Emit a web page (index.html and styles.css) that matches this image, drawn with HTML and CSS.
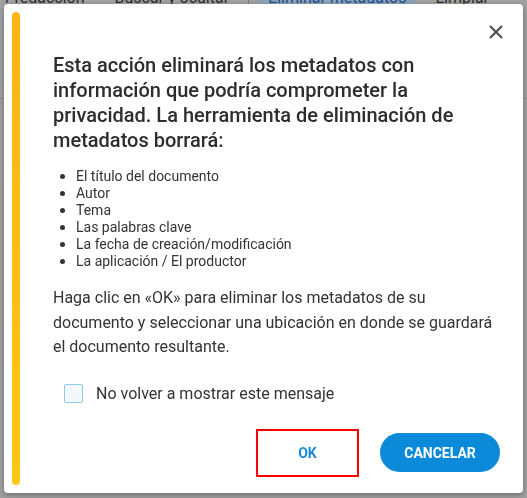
FILE: index.html
```html
<!DOCTYPE html>
<html lang="es">
<head>
    <meta charset="UTF-8">
    <meta name="viewport" content="width=device-width, initial-scale=1.0">
    <title>Eliminar metadatos</title>
    <link rel="stylesheet" href="styles.css">
</head>
<body>
    <div class="ribbon">
        <div class="tabs">
            <span class="tab tab-first">r redacción</span>
            <span class="tab">Buscar y ocultar</span>
            <span class="tab-sep"></span>
            <span class="tab tab-active">Eliminar metadatos</span>
            <span class="tab">Limpiar</span>
        </div>
    </div>

    <div class="overlay">
        <div class="dialog">
            <div class="accent"></div>
            <button class="btn-close" aria-label="Cerrar">
                <svg width="14" height="14" viewBox="0 0 14 14">
                    <path d="M1 1 L13 13 M13 1 L1 13" stroke="#4a4a4a" stroke-width="2" fill="none"/>
                </svg>
            </button>
            <div class="content">
                <h1 class="title">Esta acción eliminará los metadatos con información que podría comprometer la privacidad. La herramienta de eliminación de metadatos borrará:</h1>
                <ul class="items">
                    <li>El título del documento</li>
                    <li>Autor</li>
                    <li>Tema</li>
                    <li>Las palabras clave</li>
                    <li>La fecha de creación/modificación</li>
                    <li>La aplicación / El productor</li>
                </ul>
                <p class="info">Haga clic en «OK» para eliminar los metadatos de su documento y seleccionar una ubicación en donde se guardará el documento resultante.</p>
                <label class="check">
                    <span class="check-box"></span>
                    No volver a mostrar este mensaje
                </label>
                <div class="actions">
                    <button class="btn-ok">OK</button>
                    <button class="btn-cancel">CANCELAR</button>
                </div>
            </div>
        </div>
    </div>
</body>
</html>
```

FILE: styles.css
```css
body {
    margin: 0;
    font-family: Roboto, "Liberation Sans", sans-serif;
    background-color: #a2a2a2;
    overflow: hidden;
}
.ribbon {
    height: 98px;
    border-bottom: 1px solid #8e8e8e;
}
.tabs {
    height: 8px;
    display: flex;
    align-items: flex-end;
    font-size: 16px;
    color: #2e2e2e;
}
.tab {
    height: 20px;
    line-height: 20px;
    flex-shrink: 0;
    padding: 0 11px;
}
.tab-first {
    margin-left: -6px;
    margin-right: 8px;
}
.tab-sep {
    width: 1px;
    height: 20px;
    background-color: #7c7c7c;
    margin: 0 8px 0 8px;
}
.tab-active {
    background-color: #8fa5b9;
    color: #1f4f92;
    margin-right: 7px;
}
.overlay {
    position: fixed;
    top: 0;
    left: 0;
    right: 0;
    bottom: 0;
    padding: 4px 4px 5px 4px;
}
.dialog {
    position: relative;
    height: 100%;
    display: flex;
    background-color: #fff;
    border-radius: 4px;
    box-shadow: 0 2px 6px rgba(0, 0, 0, 0.35);
}
.accent {
    width: 8px;
    margin: 8px 0 8px 8px;
    border-radius: 4px;
    background: linear-gradient(#ffb316, #ffc616);
    flex-shrink: 0;
}
.btn-close {
    position: absolute;
    top: 21px;
    right: 20px;
    width: 14px;
    height: 14px;
    padding: 0;
    border: none;
    background: none;
    cursor: pointer;
    display: flex;
}
.content {
    flex: 1;
    padding: 49px 23px 0 33px;
    color: #333;
}
.title {
    margin: 0;
    font-size: 20px;
    line-height: 25px;
    font-weight: 500;
    color: #2d2d2d;
    padding-right: 10px;
}
.items {
    list-style: none;
    margin: 15px 0 0 0;
    padding: 0;
    font-size: 14px;
    line-height: 17px;
}
.items li {
    display: flex;
    align-items: center;
}
.items li::before {
    content: "";
    width: 5px;
    height: 5px;
    border-radius: 50%;
    background-color: #333;
    margin: 0 11px 0 7px;
}
.info {
    margin: 16px 0 0 0;
    max-width: 440px;
    font-size: 16px;
    line-height: 24.5px;
}
.check {
    display: flex;
    align-items: center;
    margin: 24px 0 0 11px;
    font-size: 16px;
    line-height: 19px;
}
.check-box {
    width: 17px;
    height: 17px;
    border: 1px solid #94c9ef;
    border-radius: 2px;
    background-color: #f3f8fc;
    margin-right: 13px;
}
.actions {
    display: flex;
    justify-content: flex-end;
    align-items: center;
    gap: 21px;
    margin-top: 26px;
}
.btn-ok {
    width: 103px;
    height: 48px;
    border: 2px solid #f00;
    background: #fff;
    color: #1b8ad6;
    font-family: inherit;
    font-size: 14px;
    font-weight: 700;
    cursor: pointer;
}
.btn-cancel {
    width: 120px;
    height: 39px;
    border: none;
    border-radius: 20px;
    background-color: #0b8ad9;
    color: #fff;
    font-family: inherit;
    font-size: 14px;
    font-weight: 700;
    cursor: pointer;
}
```
